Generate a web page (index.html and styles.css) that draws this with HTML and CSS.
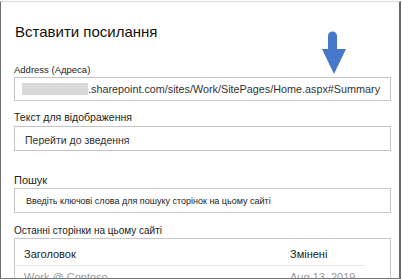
FILE: index.html
```
<!DOCTYPE html>
<html lang="uk">
<head>
<meta charset="UTF-8" />
<title>Вставити посилання</title>
<link rel="stylesheet" href="styles.css">
</head>
<body>

<div class="dialog">
  <h1 class="title">Вставити посилання</h1>

  <svg class="arrow" width="26" height="44" viewBox="0 0 26 44">
    <path d="M7 5 a4.5 4.5 0 0 1 9 0 V20 H7 Z" fill="#4677c8"/>
    <polygon points="1,18 25,18 13,43" fill="#4677c8"/>
  </svg>

  <div class="label first">Address (Адреса)</div>
  <div class="input address">
    <span class="hidden-host"></span>.sharepoint.com/sites/Work/SitePages/Home.aspx#Summary
  </div>

  <div class="label second">Текст для відображення</div>
  <div class="input display">Перейти до зведення</div>

  <div class="label search-label">Пошук</div>
  <div class="input search">Введіть ключові слова для пошуку сторінок на цьому сайті</div>

  <div class="label recent-label">Останні сторінки на цьому сайті</div>
  <div class="recent">
    <div class="recent-table">
      <div class="cell head">Заголовок</div>
      <div class="cell head">Змінені</div>
      <div class="cell muted">Work @ Contoso</div>
      <div class="cell muted">Aug 13, 2019</div>
    </div>
  </div>
</div>

</body>
</html>
```

FILE: styles.css
```
* { margin: 0; padding: 0; box-sizing: border-box; }
html, body {
  width: 402px;
  height: 280px;
  overflow: hidden;
  background: #fff;
}
body {
  font-family: 'Liberation Sans', Arial, sans-serif;
  color: #222;
}
.dialog {
  position: relative;
  margin: 1px 1px 0 0;
  height: 278px;
  border-left: 1px solid #707070;
  border-right: 2px solid #6a6a6a;
  border-top: 1px solid #dcdcdc;
  border-bottom: 1px solid #777;
  padding: 20px 8px 0 13px;
  overflow: hidden;
}
.title {
  font-size: 15px;
  font-weight: normal;
  line-height: 20px;
  color: #111;
  padding-left: 1px;
}
.arrow {
  position: absolute;
  left: 320px;
  top: 29px;
}
.label {
  font-size: 9.5px;
  line-height: 14px;
  color: #222;
}
.label.first { margin-top: 21px; }
.label.second { font-size: 10.5px; margin-top: 9px; margin-bottom: 2px; }
.label.search-label {
  font-size: 11px;
  line-height: 16px;
  margin-top: 21px;
}
.label.recent-label {
  font-size: 10px;
  line-height: 14px;
  margin-top: 11px;
}
.input {
  display: flex;
  align-items: center;
  height: 25px;
  border: 1px solid #c4c4c4;
  font-size: 10.8px;
  color: #333;
  white-space: nowrap;
}
.input.address {
  height: 24px;
  padding-left: 7px;
}
.hidden-host {
  flex-shrink: 0;
  display: inline-block;
  width: 66px;
  height: 12px;
  background: #d9d9d9;
}
.input.display { padding-left: 10px; padding-top: 2px; font-size: 10.5px; }
.input.search {
  padding-left: 11px;
  font-size: 9px;
  color: #222;
}
.recent {
  border: 1px solid #c8c8c8;
  height: 60px;
  padding: 0 25px 0 0;
}
.recent-table {
  display: grid;
  grid-template-columns: 266px 1fr;
}
.cell {
  font-size: 11px;
  line-height: 16px;
  padding-left: 9px;
}
.cell.head {
  padding-top: 7px;
  padding-bottom: 3px;
  border-bottom: 1px solid #e6e6e6;
  color: #222;
}
.cell.muted {
  color: #999;
  padding-top: 3px;
}
```
